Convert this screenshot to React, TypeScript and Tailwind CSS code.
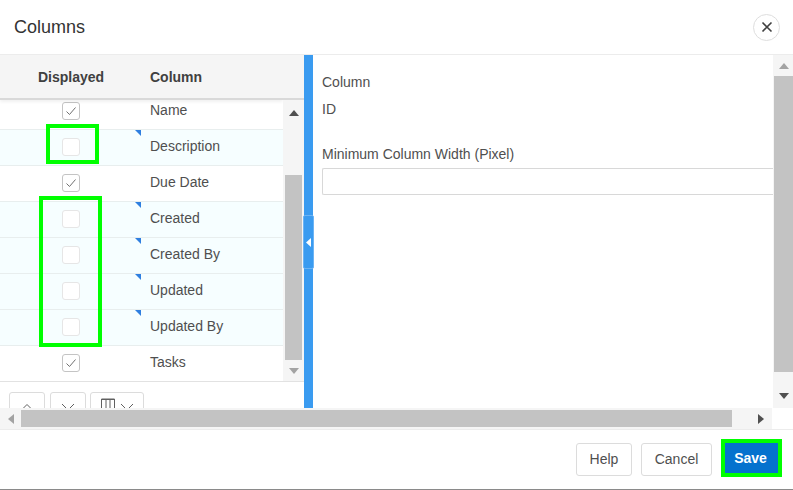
import React from "react";

const rows = [
  { name: "Name", checked: true, mark: false },
  { name: "Description", checked: false, mark: true },
  { name: "Due Date", checked: true, mark: false },
  { name: "Created", checked: false, mark: true },
  { name: "Created By", checked: false, mark: true },
  { name: "Updated", checked: false, mark: true },
  { name: "Updated By", checked: false, mark: true },
  { name: "Tasks", checked: true, mark: false },
];

function Check({ checked }: { checked: boolean }) {
  return (
    <span
      className={`flex h-[18px] w-[18px] items-center justify-center rounded-[3px] border bg-white ${
        checked ? "border-[#c4c4c4]" : "border-[#e6e6e6]"
      }`}
    >
      {checked && (
        <svg width="12" height="12" viewBox="0 0 12 12" fill="none" stroke="#707070" strokeWidth="1">
          <path d="M1.5 6.5 L4.5 9.5 L10.5 2.5" />
        </svg>
      )}
    </span>
  );
}

function Tri({ dir, color, w = 10, h = 6 }: { dir: "up" | "down" | "left" | "right"; color: string; w?: number; h?: number }) {
  const d = {
    up: `M0 ${h} L${w / 2} 0 L${w} ${h} Z`,
    down: `M0 0 L${w} 0 L${w / 2} ${h} Z`,
    left: `M${w} 0 L${w} ${h} L0 ${h / 2} Z`,
    right: `M0 0 L0 ${h} L${w} ${h / 2} Z`,
  }[dir];
  return (
    <svg width={w} height={h} viewBox={`0 0 ${w} ${h}`}>
      <path d={d} fill={color} />
    </svg>
  );
}

function ToolBtn({ children, w }: { children: React.ReactNode; w: string }) {
  return (
    <span className={`flex h-[30px] shrink-0 items-start justify-center gap-1 rounded-[3px] border border-[#dcdcdc] bg-white pt-[8px] ${w}`}>
      {children}
    </span>
  );
}

function Chevron({ up }: { up?: boolean }) {
  return (
    <svg width="14" height="8" viewBox="0 0 14 8" fill="none" stroke="#606060" strokeWidth="1" className="mt-[2px]">
      <path d={up ? "M1 7.5 L7 1.5 L13 7.5" : "M1 1 L7 7 L13 1"} />
    </svg>
  );
}

export default function App() {
  return (
    <div className="relative flex h-[490px] w-[793px] flex-col overflow-hidden border-b border-[#8a8a8a] bg-white font-['Liberation_Sans',Arial,sans-serif] text-[14px] text-[#4f4f4f]">
      {/* Header */}
      <header className="flex h-[55px] shrink-0 items-center justify-between border-b border-[#ececec] pl-[14px] pr-[13px]">
        <h1 className="text-[18px] leading-[22px] text-[#333]">Columns</h1>
        <button className="flex h-[27px] w-[27px] items-center justify-center rounded-full border border-[#dedede] bg-white">
          <svg width="12" height="12" viewBox="0 0 12 12" stroke="#404040" strokeWidth="1.6" fill="none">
            <path d="M1.5 1.5 L10.5 10.5 M10.5 1.5 L1.5 10.5" />
          </svg>
        </button>
      </header>

      {/* Body */}
      <div className="flex h-[353px] shrink-0">
        {/* Left */}
        <div className="flex w-[304px] shrink-0 flex-col">
          <div className="flex h-[327px] shrink-0 border-b border-[#e2e2e2]">
            <div className="flex w-[283px] shrink-0 flex-col overflow-hidden">
              <div className="relative z-10 flex h-[45px] shrink-0 items-center border-b-2 border-[#d9d9d9] bg-[#f5f5f5] pt-[2px] font-bold text-[#404040] shadow-[0_2px_3px_rgba(0,0,0,0.06)]">
                <span className="w-[142px] pl-[38px]">Displayed</span>
                <span className="pl-[8px]">Column</span>
              </div>
              <div className="mt-[-6px] flex flex-col">
                {rows.map((r) => (
                  <div
                    key={r.name}
                    className={`relative flex h-[36px] shrink-0 items-center border-b border-[#e8eeee] ${
                      r.mark ? "bg-[#f6feff]" : "bg-white"
                    }`}
                  >
                    <span className="flex w-[142px] justify-center pb-[1px]">
                      <Check checked={r.checked} />
                    </span>
                    <span className="pb-[2px] pl-[8px]">{r.name}</span>
                    {r.mark && (
                      <span className="absolute left-[135px] top-0 h-0 w-0 border-l-[6px] border-t-[6px] border-l-transparent border-t-[#2f7fe0]" />
                    )}
                  </div>
                ))}
              </div>
            </div>
            {/* Vertical scrollbar */}
            <div className="flex w-[21px] shrink-0 flex-col bg-[#f5f5f5]">
              <div className="h-[45px] shrink-0 border-b-2 border-[#d9d9d9]" />
              <div className="flex flex-1 flex-col px-[2px]">
                <div className="flex h-[75px] shrink-0 items-start justify-center pt-[10px]">
                  <Tri dir="up" color="#505050" />
                </div>
                <div className="h-[185px] shrink-0 bg-[#c3c3c3]" />
                <div className="flex h-[21px] shrink-0 items-center justify-center">
                  <Tri dir="down" color="#a3a3a3" />
                </div>
              </div>
            </div>
          </div>
          <div className="flex h-[26px] overflow-hidden pl-[9px] pt-[10px]">
            <ToolBtn w="w-[36px]"><Chevron up /></ToolBtn>
            <span className="w-[5px] shrink-0" />
            <ToolBtn w="w-[36px]"><Chevron /></ToolBtn>
            <span className="w-[4px] shrink-0" />
            <ToolBtn w="w-[54px]">
              <svg width="16" height="14" viewBox="0 0 16 14" fill="none" stroke="#606060" strokeWidth="1" className="mt-[-3px]">
                <path d="M1.5 14 V1 H14.5 V14 M6 1 V14 M10 1 V14 M1 1.5 H15" />
              </svg>
              <Chevron />
            </ToolBtn>
          </div>
        </div>

        {/* Splitter */}
        <div className="relative w-[9px] shrink-0 bg-[#3a9bf0]">
          <div className="absolute left-[-1px] top-[160px] flex h-[54px] w-[11px] items-center justify-center rounded-[2px] border border-[#6cb4f5] bg-[#3a9bf0]">
            <Tri dir="left" color="#ffffff" w={5} h={9} />
          </div>
        </div>

        {/* Right */}
        <div className="flex min-w-0 flex-1">
          <div className="flex w-[460px] shrink-0 flex-col pl-[9px] pt-[19px]">
            <div className="leading-[16px]">Column</div>
            <div className="mt-[11px] leading-[16px]">ID</div>
            <div className="mt-[29px] leading-[16px]">Minimum Column Width (Pixel)</div>
            <div className="mt-[6px] h-[27px] rounded-l-[2px] border border-r-0 border-[#d8d8d8] bg-white" />
          </div>
          <div className="flex w-[20px] shrink-0 flex-col bg-[#f5f5f5] pl-[1px]">
            <div className="flex h-[21px] shrink-0 items-center justify-center">
              <Tri dir="up" color="#a3a3a3" />
            </div>
            <div className="h-[296px] shrink-0 bg-[#c3c3c3]" />
            <div className="flex h-[36px] shrink-0 items-start justify-center pt-[21px]">
              <Tri dir="down" color="#505050" />
            </div>
          </div>
        </div>
      </div>

      {/* Horizontal scrollbar */}
      <div className="flex h-[22px] shrink-0 border-b border-[#ececec]">
        <div className="flex w-[772px] shrink-0 items-center bg-[#f5f5f5]">
          <div className="flex w-[21px] shrink-0 items-center justify-center">
            <Tri dir="left" color="#a3a3a3" w={6} h={10} />
          </div>
          <div className="h-[17px] w-[711px] shrink-0 bg-[#c3c3c3]" />
          <div className="flex flex-1 items-center justify-end pr-[8px]">
            <Tri dir="right" color="#505050" w={6} h={10} />
          </div>
        </div>
      </div>

      {/* Footer */}
      <footer className="flex flex-1 items-start justify-end gap-[9px] pr-[11px] pt-[9px]">
        <button className="mt-[4px] h-[33px] w-[56px] rounded-[3px] border border-[#dcdcdc] bg-white text-[#4f4f4f]">Help</button>
        <button className="mt-[4px] h-[33px] w-[71px] rounded-[3px] border border-[#dcdcdc] bg-white text-[#4f4f4f]">Cancel</button>
        <button className="h-[38px] w-[61px] border-[4px] border-[#00ff00] bg-[#0572ce] pr-[2px] font-bold text-white">Save</button>
      </footer>

      {/* Green highlight annotations */}
      <div className="pointer-events-none absolute left-[46px] top-[124px] h-[40px] w-[53px] border-[4px] border-[#00ff00]" />
      <div className="pointer-events-none absolute left-[39px] top-[196px] h-[151px] w-[63px] border-[4px] border-[#00ff00]" />
    </div>
  );
}
